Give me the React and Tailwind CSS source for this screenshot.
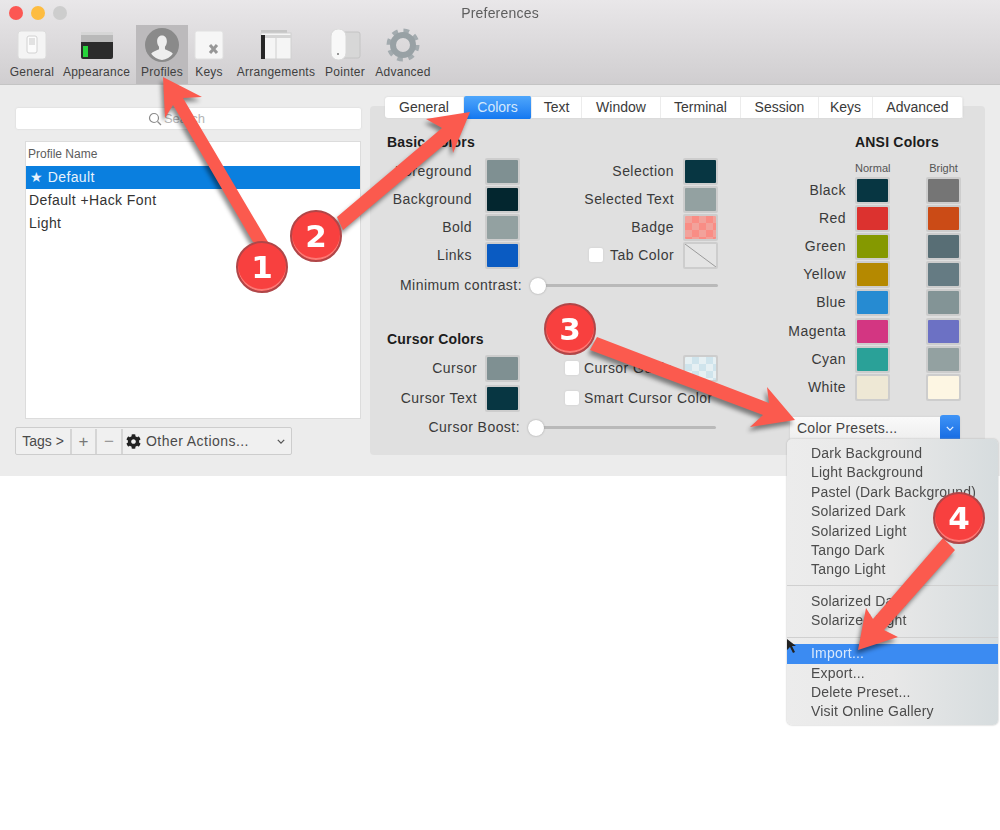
import React from 'react';
import { FaCog } from 'react-icons/fa';

const FONT = "font-['Liberation_Sans',Arial,sans-serif]";

const basic = [
  { label: 'Foreground', color: 'bg-[#7f9092]', right: { label: 'Selection', color: 'bg-[#073642]' } },
  { label: 'Background', color: 'bg-[#03262f]', right: { label: 'Selected Text', color: 'bg-[#93a1a1]' } },
  { label: 'Bold', color: 'bg-[#93a1a1]', right: { label: 'Badge', color: 'bg-[conic-gradient(#f98d85_25%,#f2a29b_0_50%,#f98d85_0_75%,#f2a29b_0)] bg-[length:14px_14px]' } },
  { label: 'Links', color: 'bg-[#0a5bc2]', right: { label: 'Tab Color', check: true, empty: true } },
];

const ansi = [
  ['Black', 'bg-[#073642]', 'bg-[#757575]'],
  ['Red', 'bg-[#dc322f]', 'bg-[#cb4b16]'],
  ['Green', 'bg-[#859900]', 'bg-[#586e75]'],
  ['Yellow', 'bg-[#b58900]', 'bg-[#657b83]'],
  ['Blue', 'bg-[#268bd2]', 'bg-[#839496]'],
  ['Magenta', 'bg-[#d33682]', 'bg-[#6c71c4]'],
  ['Cyan', 'bg-[#2aa198]', 'bg-[#93a1a1]'],
  ['White', 'bg-[#eee8d5]', 'bg-[#fdf6e3]'],
];

const tabs = [
  ['General', 'w-[79px]'],
  ['Colors', 'w-[68px]'],
  ['Text', 'w-[50px]'],
  ['Window', 'w-[79px]'],
  ['Terminal', 'w-[80px]'],
  ['Session', 'w-[78px]'],
  ['Keys', 'w-[54px]'],
  ['Advanced', 'w-[90px]'],
];

function Swatch({ color, empty }) {
  return (
    <div className="w-[35px] h-[27px] p-[2px] bg-[#cdcdcd] rounded-[2px] shrink-0">
      {empty ? (
        <svg viewBox="0 0 31 23" className="w-full h-full bg-[#e4e4e4]">
          <line x1="0" y1="0" x2="31" y2="23" stroke="#9a9a9a" strokeWidth="1" />
        </svg>
      ) : (
        <div className={`w-full h-full rounded-[1px] ${color}`} />
      )}
    </div>
  );
}

function Check() {
  return <div className="w-[14px] h-[14px] bg-white rounded-[2px] shadow-[0_0_2px_#c8c8c8] shrink-0" />;
}

function Slider({ width, label, labelWidth }) {
  return (
    <div className="flex items-center h-[20px]">
      <span className={`flex justify-end whitespace-nowrap ${labelWidth}`}>{label}</span>
      <div className={`relative ml-[8px] h-[3px] bg-[#b9b9b9] rounded-full ${width}`}>
        <div className="absolute left-0 -top-[6px] w-[16px] h-[16px] rounded-full bg-white shadow-[0_0_2px_#999]" />
      </div>
    </div>
  );
}

function ToolItem({ label, w, active, children }) {
  return (
    <div className={`flex flex-col items-center ${w} ${active ? 'bg-[#bcbabc]' : ''}`}>
      <div className="h-[34px] mt-[3px] flex items-center justify-center">{children}</div>
      <span className="mt-[3px] whitespace-nowrap leading-[14px] tracking-[0.25px]">{label}</span>
    </div>
  );
}

function Toolbar() {
  return (
    <div className="h-[85px] bg-gradient-to-b from-[#e9e7e9] to-[#d0ced0] border-b border-[#c4c4c4]">
      <div className="relative h-[26px] flex items-center justify-center text-[14px] text-[#5e5e5e]">
        <div className="absolute left-[9px] top-[6px] flex gap-[8px]">
          <div className="w-[14px] h-[14px] rounded-full bg-[#fc5753]" />
          <div className="w-[14px] h-[14px] rounded-full bg-[#fdbc40]" />
          <div className="w-[14px] h-[14px] rounded-full bg-[#cdcdcd]" />
        </div>
        <span className="tracking-[0.2px]">Preferences</span>
      </div>
      <div className="flex h-[59px] -mt-[1px] pl-[7px] text-[12px] text-[#3f3f3f]">
        <ToolItem label="General" w="w-[50px]">
          <svg viewBox="0 0 32 32" className="w-[32px] h-[32px]">
            <rect x="2" y="2" width="28" height="28" rx="3" fill="#f4f4f4" stroke="#dcdcdc" />
            <rect x="11" y="7" width="10" height="17" rx="2" fill="#fbfbfb" stroke="#d2d2d2" />
            <rect x="13" y="9" width="6" height="7" fill="#e2e2e2" />
          </svg>
        </ToolItem>
        <ToolItem label="Appearance" w="w-[79px]">
          <svg viewBox="0 0 32 32" className="w-[32px] h-[32px]">
            <rect x="0" y="3" width="32" height="27" rx="2" fill="#2b2b2b" />
            <rect x="0" y="3" width="32" height="10" fill="#b9b9b9" />
            <rect x="0" y="3" width="32" height="3" fill="#d6d6d6" />
            <rect x="2" y="17" width="5" height="11" fill="#27d33b" />
          </svg>
        </ToolItem>
        <ToolItem label="Profiles" w="w-[52px]" active>
          <svg viewBox="0 0 32 32" className="w-[34px] h-[34px]">
            <circle cx="16" cy="16" r="16" fill="#8a8a8a" />
            <path d="M16 7c3 0 4.600 2.400 4.600 5.500 0 2.300-.9 4.200-1.800 5.200v2.300c2.800 1.200 6 2.200 7.400 4.200A14.500 14.500 0 0 1 16 30 14.500 14.500 0 0 1 5.800 24.200c1.400-2 4.600-3 7.400-4.200v-2.300c-.9-1-1.800-2.900-1.800-5.200C11.400 9.400 13 7 16 7z" fill="#eeeeee" />
          </svg>
        </ToolItem>
        <ToolItem label="Keys" w="w-[42px]">
          <svg viewBox="0 0 32 32" className="w-[32px] h-[32px]">
            <rect x="2" y="2" width="28" height="28" rx="2" fill="#f6f6f6" stroke="#e0e0e0" />
            <path d="M17 16l7 8M24 16l-7 8" stroke="#979797" strokeWidth="3" />
          </svg>
        </ToolItem>
        <ToolItem label="Arrangements" w="w-[92px]">
          <svg viewBox="0 0 32 32" className="w-[32px] h-[32px]">
            <rect x="1" y="1" width="26" height="8" fill="#c6c6c6" />
            <rect x="1" y="4" width="30" height="26" fill="#f5f5f5" stroke="#d0d0d0" />
            <rect x="1" y="6" width="30" height="3" fill="#d5d5d5" />
            <rect x="1" y="6" width="4" height="24" fill="#262626" />
            <line x1="16" y1="9" x2="16" y2="30" stroke="#cfcfcf" />
          </svg>
        </ToolItem>
        <ToolItem label="Pointer" w="w-[46px]">
          <svg viewBox="0 0 32 32" className="w-[32px] h-[32px]">
            <rect x="12" y="3" width="19" height="26" rx="2" fill="#d7d7d7" stroke="#c4c4c4" />
            <rect x="2" y="0" width="15" height="31" rx="7" fill="#f8f8f8" stroke="#d8d8d8" />
            <circle cx="9" cy="25" r="1" fill="#777" />
          </svg>
        </ToolItem>
        <ToolItem label="Advanced" w="w-[70px]">
          <svg viewBox="0 0 34 34" className="w-[34px] h-[34px]">
            <circle cx="17" cy="17" r="14" fill="none" stroke="#a3abaf" strokeWidth="5" strokeDasharray="5.500 5.500" />
            <circle cx="17" cy="17" r="10" fill="none" stroke="#98a1a5" strokeWidth="6" />
          </svg>
        </ToolItem>
      </div>
    </div>
  );
}

function ProfilesColumn() {
  return (
    <div className="w-[346px] ml-[15px] pt-[23px]">
      <div className="relative h-[21px] ml-[1px] pr-[24px] bg-white rounded-[2px] shadow-[0_0_2px_#cfcfcf] flex items-center justify-center text-[13px] text-[#b5b5b5]">
        <svg viewBox="0 0 14 14" className="w-[14px] h-[14px] mr-[2px]" fill="none" stroke="#8b8b8b" strokeWidth="1.200">
          <circle cx="6" cy="6" r="4.500" />
          <line x1="9.500" y1="9.500" x2="13" y2="13" />
        </svg>
        <span>Search</span>
      </div>
      <div className="ml-[10px] mt-[12px] h-[278px] bg-white border border-[#dcdcdc]">
        <div className="h-[24px] flex items-center px-[2px] text-[12px] text-[#5c5c5c]">Profile Name</div>
        <div className="h-[23px] flex items-center px-[4px] bg-[#0a7fdf] text-[14px] tracking-[0.4px] text-[#e8f2fc]">★ Default</div>
        <div className="h-[23px] flex items-center px-[3px] text-[14px] tracking-[0.4px] text-[#333]">Default +Hack Font</div>
        <div className="h-[23px] flex items-center px-[3px] text-[14px] tracking-[0.4px] text-[#333]">Light</div>
      </div>
      <div className="mt-[8px] flex h-[28px] w-[277px] pt-[1px] bg-[#f0f0f0] border border-[#cdcdcd] rounded-[2px] text-[14px] text-[#4a4a4a]">
        <div className="w-[56px] flex items-center justify-center border-r-2 border-[#d5d5d5]">Tags &gt;</div>
        <div className="w-[25px] flex items-center justify-center border-r-2 border-[#d5d5d5] text-[17px] text-[#777]">+</div>
        <div className="w-[26px] flex items-center justify-center border-r-2 border-[#d5d5d5] text-[17px] text-[#999]">−</div>
        <div className="flex-1 flex items-center pl-[3px] pr-[6px]">
          <FaCog className="w-[15px] h-[15px] text-[#222] mr-[5px]" />
          <span className="tracking-[0.45px]">Other Actions...</span>
          <svg viewBox="0 0 10 6" className="ml-auto w-[8px] h-[5px]" fill="none" stroke="#555" strokeWidth="1.600">
            <path d="M1 1l4 4 4-4" />
          </svg>
        </div>
      </div>
    </div>
  );
}

function ColorsPanel() {
  return (
    <div className="w-[615px] h-[349px] ml-[9px] mt-[21px] bg-[#e0e0e0] rounded-[4px] text-[14px] tracking-[0.45px] text-[#3a3a3a]">
      <div className="-mt-[9px] ml-[15px] flex w-[578px] h-[21px] bg-white rounded-[3px] shadow-[0_0_2px_#cfcfcf] tracking-normal relative">
        {tabs.map(([name, w]) => (
          <div
            key={name}
            className={`${w} flex items-center justify-center border-r border-[#ececec] ${name === 'Colors' ? 'bg-gradient-to-b from-[#4ea6fb] to-[#1278f0] text-[#d4e8fc] -my-[1px] rounded-[2px]' : ''}`}
          >
            {name}
          </div>
        ))}
      </div>
      <div className="flex">
        <div className="w-[350px] pl-[17px]">
          <div className="mt-[16px] h-[16px] leading-[16px] font-bold tracking-[0.2px] text-[#1c1c1c]">Basic Colors</div>
          <div className="mt-[7px]">
            {basic.map(r => (
              <div key={r.label} className="flex items-center h-[28px]">
                <span className="w-[85px] flex justify-end whitespace-nowrap">{r.label}</span>
                <div className="ml-[13px]"><Swatch color={r.color} /></div>
                <div className="flex items-center justify-end w-[198px]">
                  {r.right.check && <div className="mr-[7px]"><Check /></div>}
                  <span className="mr-[9px] whitespace-nowrap">{r.right.label}</span>
                  <Swatch color={r.right.color} empty={r.right.empty} />
                </div>
              </div>
            ))}
          </div>
          <div className="mt-[6px]">
            <Slider label="Minimum contrast:" labelWidth="w-[135px]" width="w-[188px]" />
          </div>
          <div className="mt-[36px] h-[16px] leading-[16px] font-bold tracking-[0.2px] text-[#1c1c1c]">Cursor Colors</div>
          <div className="mt-[6px] flex items-center h-[30px]">
            <span className="w-[90px] text-right">Cursor</span>
            <div className="ml-[8px]"><Swatch color="bg-[#7f9092]" /></div>
            <div className="ml-[45px]"><Check /></div>
            <span className="ml-[5px] w-[99px] whitespace-nowrap">Cursor Guide</span>
            <Swatch color="bg-[conic-gradient(#cfe4ec_25%,#e6f0f3_0_50%,#cfe4ec_0_75%,#e6f0f3_0)] bg-[length:14px_14px]" />
          </div>
          <div className="flex items-center h-[30px]">
            <span className="w-[90px] flex justify-end whitespace-nowrap">Cursor Text</span>
            <div className="ml-[8px]"><Swatch color="bg-[#073642]" /></div>
            <div className="ml-[45px]"><Check /></div>
            <span className="ml-[5px] whitespace-nowrap">Smart Cursor Color</span>
          </div>
          <div className="mt-[4px]">
            <Slider label="Cursor Boost:" labelWidth="w-[133px]" width="w-[188px]" />
          </div>
        </div>
        <div className="w-[248px] pt-[16px]">
          <div className="ml-[135px] h-[16px] leading-[16px] font-bold tracking-[0.2px] text-[#1c1c1c] whitespace-nowrap">ANSI Colors</div>
          <div className="flex h-[26px] items-end ml-[135px] text-[11px] tracking-normal text-[#555] leading-[16px]">
            <span className="w-[35px] text-center">Normal</span>
            <span className="ml-[36px] w-[35px] text-center">Bright</span>
          </div>
          {ansi.map(([name, a, b]) => (
            <div key={name} className="flex items-center h-[28.2px]">
              <span className="w-[126px] text-right">{name}</span>
              <div className="ml-[9px]"><Swatch color={a} /></div>
              <div className="ml-[36px]"><Swatch color={b} /></div>
            </div>
          ))}
          <div className="mt-[15px] ml-[70px] w-[170px] h-[23px] flex items-center bg-gradient-to-b from-[#fafafa] to-[#eeeeee] rounded-[2px] shadow-[0_0_2px_#c4c4c4]">
            <span className="ml-[7px] text-[#444] tracking-[0.25px]">Color Presets...</span>
            <div className="ml-auto w-[20px] h-[27px] rounded-[3px] bg-gradient-to-b from-[#3f94f7] to-[#0f66e0] flex items-center justify-center">
              <svg viewBox="0 0 10 6" className="w-[8px] h-[5px]" fill="none" stroke="#e6f1ff" strokeWidth="1.600">
                <path d="M1 1l4 4 4-4" />
              </svg>
            </div>
          </div>
        </div>
      </div>
    </div>
  );
}

function PresetMenu() {
  const group1 = ['Dark Background', 'Light Background', 'Pastel (Dark Background)', 'Solarized Dark', 'Solarized Light', 'Tango Dark', 'Tango Light'];
  const group2 = ['Solarized Dark', 'Solarized Light'];
  const group3 = ['Export...', 'Delete Preset...', 'Visit Online Gallery'];
  const Item = ({ text }) => <div className="h-[19.4px] leading-[19.4px] pl-[24px] whitespace-nowrap">{text}</div>;
  return (
    <div className="absolute left-[787px] top-[439px] w-[211px] h-[286px] pt-[5px] rounded-[5px] bg-gradient-to-r from-[#ececec] via-[#e8e8e8] to-[#d6dcde] text-[14px] tracking-[0.2px] text-[#4c4c4c] shadow-[0_0_2px_#aaa]">
      {group1.map(t => <Item key={t} text={t} />)}
      <div className="h-px bg-[#d0d0d0] mt-[5px] mb-[6px]" />
      {group2.map(t => <Item key={t} text={t} />)}
      <div className="h-px bg-[#d0d0d0] mt-[6px] mb-[6px]" />
      <div className="h-[20px] leading-[18px] pl-[24px] bg-[#3b8bf2] text-[#d8e8fb]">Import...</div>
      {group3.map(t => <Item key={t} text={t} />)}
    </div>
  );
}

function Arrows() {
  const arrows = [
    '163,77 202,97 183,98 268,242 253,242 173,105 165,118',
    '470,112 426,119 442,128 337,217 343,230 451,139 453,153',
    '795,420 767,387 769,403 597,337 590,350 763,415 750,427',
    '858,650 866,608 873,619 943,538 955,550 884,630 898,637',
  ];
  return (
    <svg viewBox="0 0 1000 830" className="absolute inset-0 w-[1000px] h-[830px] pointer-events-none">
      <polygon points="787,639 787,650 790,647 793,653 795,652 792,646 796,646" fill="#222" />
      {arrows.map(p => (
        <polygon key={p} points={p} fill="#fb5a4e" className="drop-shadow-[-2px_4px_2px_rgba(0,0,0,0.45)]" />
      ))}
    </svg>
  );
}

function Badge({ n, pos }) {
  return (
    <div className={`absolute ${pos} w-[52px] h-[52px] rounded-full bg-[#f8403f] border-2 border-[#b04648] shadow-[inset_0_-2px_0_#fb7a76] flex items-center justify-center text-white font-['DejaVu_Sans',sans-serif] font-bold text-[31px] leading-none`}>
      {n}
    </div>
  );
}

export default function App() {
  return (
    <div className={`relative w-[1000px] h-[830px] bg-white overflow-hidden ${FONT}`}>
      <div className="blur-[0.6px]">
        <div className="h-[476px] bg-[#ececec] rounded-t-[5px]">
          <Toolbar />
          <div className="flex">
            <ProfilesColumn />
            <ColorsPanel />
          </div>
        </div>
        <PresetMenu />
        <Arrows />
        <Badge n="1" pos="left-[236px] top-[241px]" />
        <Badge n="2" pos="left-[290px] top-[210px]" />
        <Badge n="3" pos="left-[544px] top-[303px]" />
        <Badge n="4" pos="left-[933px] top-[492px]" />
      </div>
    </div>
  );
}
